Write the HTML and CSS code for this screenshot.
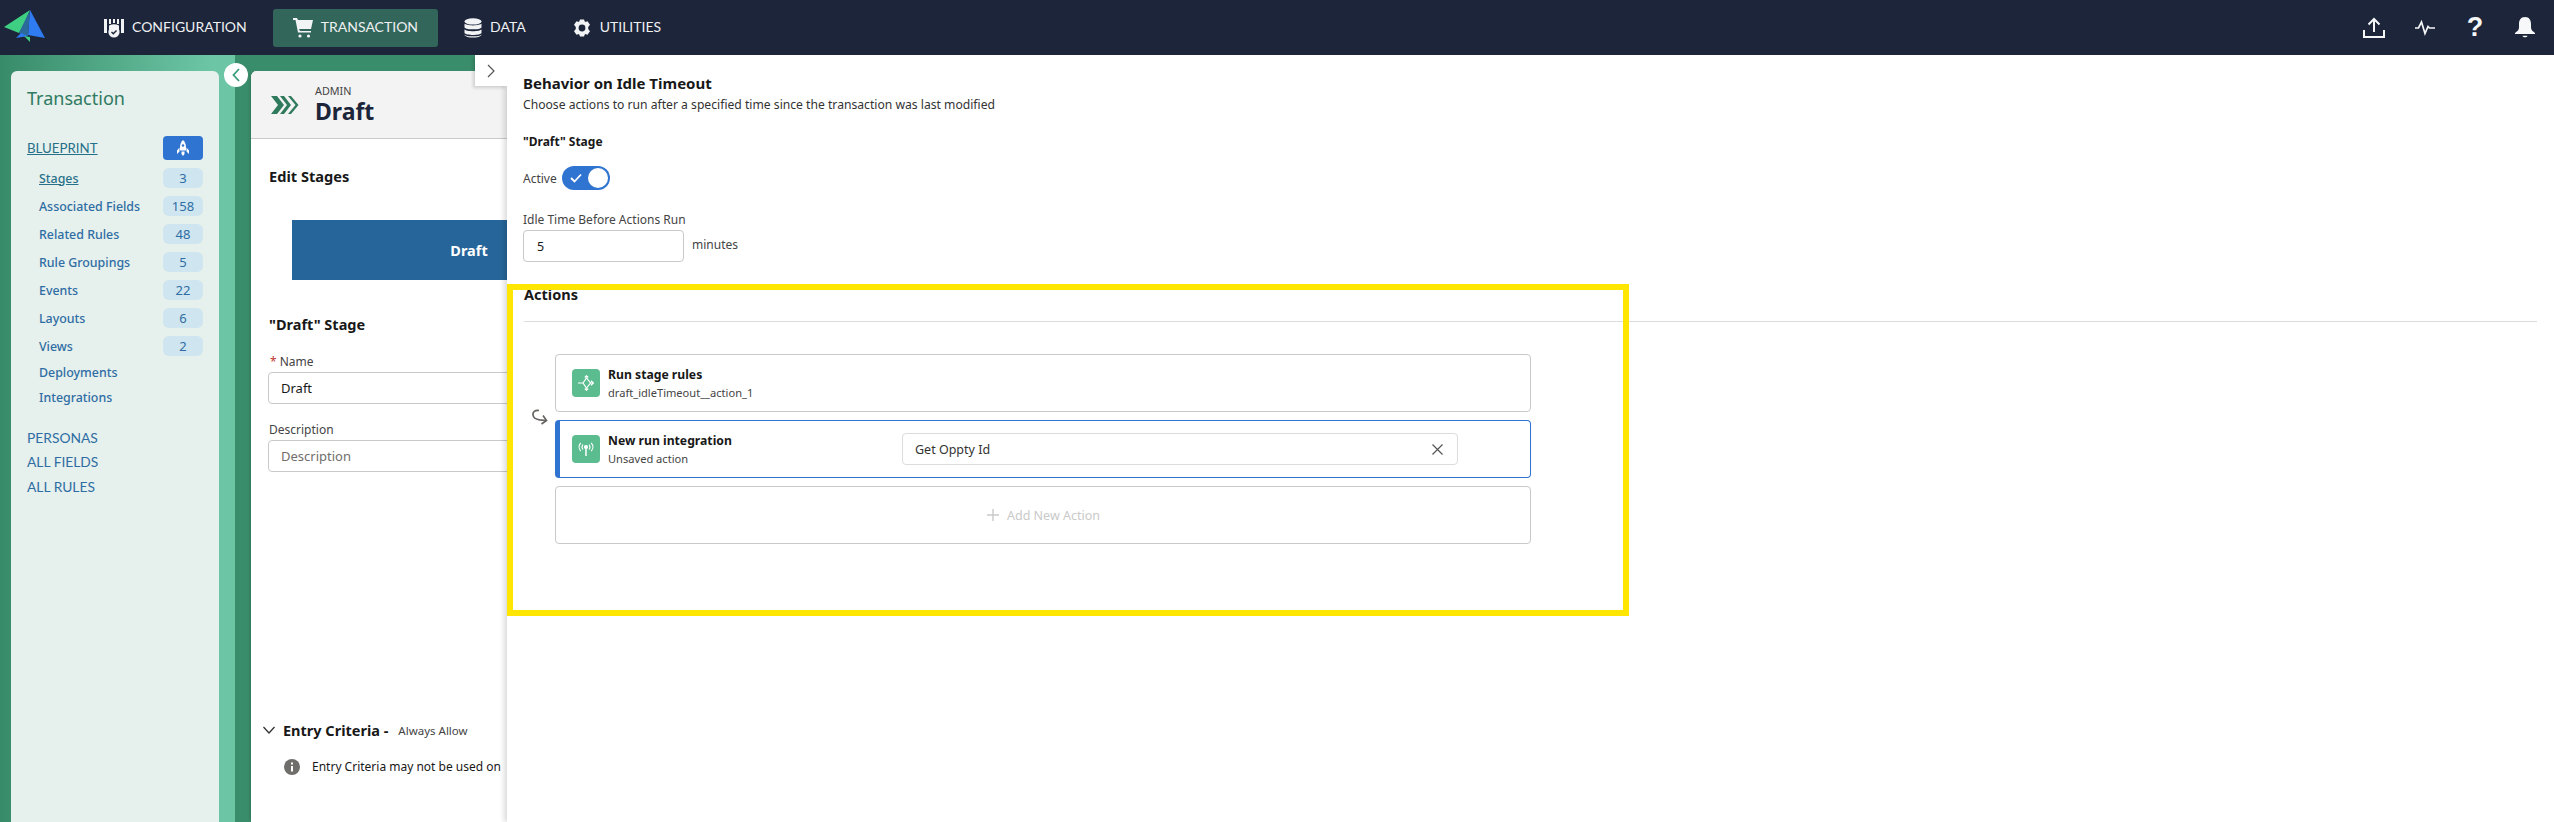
FILE: index.html
```html
<!DOCTYPE html>
<html lang="en">
<head>
<meta charset="utf-8">
<title>Behavior on Idle Timeout</title>
<link rel="stylesheet" href="styles.css">
</head>
<body>
<div class="app">
  <header class="topbar">
    <div class="logo">
      <svg width="46" height="46" viewBox="0 0 46 46"><path d="M3 27L29 10 24 22 18 33Z" fill="#3fcf83"/><path d="M29 10L44 38 27 35Z" fill="#2f7bf2"/><path d="M29 10L18 33 27 36Z" fill="#2a6b9c"/><path d="M15 38L20 33 27 36Z" fill="#2f7bf2"/><path d="M23 36L29 42 29 37Z" fill="#3fcf83"/></svg>
    </div>
    <nav class="nav">
      <a class="nav-item">
        <svg width="20" height="20" viewBox="0 0 20 20" fill="#f1f3f5"><rect x="0" y="1" width="3" height="14"/><rect x="17" y="1" width="3" height="14"/><rect x="5" y="1" width="2" height="5"/><rect x="9" y="1" width="2" height="4"/><rect x="13" y="1" width="2" height="5"/><path d="M5 7.500Q10 5 15 7.500V12H5Z"/><circle cx="10" cy="14" r="5.600"/><path d="M7.500 14l1.800 1.800 3.200-3.400" fill="none" stroke="#1c2539" stroke-width="1.400"/></svg>
        <span>CONFIGURATION</span>
      </a>
      <a class="nav-item active">
        <svg width="20" height="20" viewBox="0 0 20 20" fill="#f1f3f5"><path d="M0 0H4L5 2H20L18 11H6L7 13H18V14.500H5L2.500 2H0Z"/><circle cx="7" cy="18" r="1.600"/><circle cx="15.500" cy="18" r="1.600"/></svg>
        <span>TRANSACTION</span>
      </a>
      <a class="nav-item">
        <svg width="18" height="20" viewBox="0 0 18 20" fill="#f1f3f5"><ellipse cx="9" cy="3.400" rx="8.500" ry="3.200"/><path d="M.5 5.600C2 8 16 8 17.500 5.600V9.400C16 12 2 12 .5 9.400Z"/><path d="M.5 11.200C2 13.800 16 13.800 17.500 11.200V15C16 17.600 2 17.600 .5 15Z"/><path d="M.5 16.400C2 19 16 19 17.500 16.400V17C16 20.400 2 20.400 .5 17Z"/></svg>
        <span>DATA</span>
      </a>
      <a class="nav-item">
        <svg width="20" height="20" viewBox="0 0 20 20"><path d="M8 1.500H12L13 4 15.500 3.200 18 6.800 16.200 9V11L18 13.200 15.500 16.800 13 16 12 18.500H8L7 16 4.500 16.800 2 13.200 3.800 11V9L2 6.800 4.500 3.200 7 4Z" fill="#f1f3f5"/><circle cx="10" cy="10" r="3.400" fill="#1c2539"/></svg>
        <span>UTILITIES</span>
      </a>
    </nav>
    <div class="tools">
      <svg width="22" height="22" viewBox="0 0 22 22" fill="none" stroke="#f4f6f8" stroke-width="2"><path d="M1 13V20H21V13"/><path d="M11 15V2M5.500 7.500L11 2l5.500 5.500"/></svg>
      <svg width="20" height="16" viewBox="0 0 20 16" fill="none" stroke="#f4f6f8" stroke-width="1.700"><path d="M0 8H3.500L6.500 2 10 13.500 13 6.500 14.500 8H20"/></svg>
      <span class="help">?</span>
      <svg width="20" height="22" viewBox="0 0 20 22" fill="#f7f8fa"><path d="M10 0C14.500 0 16 3.500 16 7V10.500C16 13 18 14.500 20 16V17H0V16C2 14.500 4 13 4 10.500V7C4 3.500 5.500 0 10 0Z"/><path d="M7.500 18.800H12.500C12 20.800 8 20.800 7.500 18.800Z"/></svg>
    </div>
  </header>

  <div class="workspace">
    <aside class="side">
      <div class="side-card">
        <div class="side-title">Transaction</div>
        <div class="bp-row">
          <a class="bp-link">BLUEPRINT</a>
          <span class="bp-btn">
            <svg width="12" height="16" viewBox="0 0 12 16" fill="#fff"><path d="M6 0C8.200 2 9 4.500 9 7.500V10.500H3V7.500C3 4.500 3.800 2 6 0Z"/><circle cx="6" cy="5.500" r="1.200" fill="#2f74d0"/><path d="M2.500 7.500L0 10.500V14L2.500 11.500ZM9.500 7.500L12 10.500V14L9.500 11.500Z"/><path d="M4.500 11.500H7.500V14L6 16 4.500 14Z"/></svg>
          </span>
        </div>
        <ul class="count-list">
          <li><a class="current">Stages</a><span class="badge">3</span></li>
          <li><a>Associated Fields</a><span class="badge">158</span></li>
          <li><a>Related Rules</a><span class="badge">48</span></li>
          <li><a>Rule Groupings</a><span class="badge">5</span></li>
          <li><a>Events</a><span class="badge">22</span></li>
          <li><a>Layouts</a><span class="badge">6</span></li>
          <li><a>Views</a><span class="badge">2</span></li>
        </ul>
        <a class="plain first">Deployments</a>
        <a class="plain second">Integrations</a>
        <a class="caps personas">PERSONAS</a>
        <a class="caps fields">ALL FIELDS</a>
        <a class="caps rules">ALL RULES</a>
      </div>
      <button class="collapse" aria-label="Collapse">
        <svg width="8" height="14" viewBox="0 0 8 14" fill="none" stroke="#3a9d7b" stroke-width="1.800"><path d="M7 1L1.500 7 7 13"/></svg>
      </button>
    </aside>

    <main class="main">
      <div class="main-head">
        <svg width="28" height="18" viewBox="0 0 28 18" fill="#2f7a5d"><path d="M0 0H6L13 9 6 18H0L7 9Z"/><path d="M9 0H13L20 9 13 18H9L16 9Z"/><path d="M17 0H20L27.500 9 20 18H17L24.500 9Z"/></svg>
        <div>
          <div class="eyebrow">ADMIN</div>
          <div class="page-title">Draft</div>
        </div>
      </div>
      <div class="main-body">
        <h2 class="edit-title">Edit Stages</h2>
        <div class="stage-bar">Draft</div>
        <h3 class="stage-title">"Draft" Stage</h3>
        <label class="field-label name-label"><span class="req">*</span>Name</label>
        <input class="text-input" value="Draft">
        <label class="field-label desc-label">Description</label>
        <input class="text-input" placeholder="Description">
        <div class="entry-head">
          <svg width="12" height="8" viewBox="0 0 12 8" fill="none" stroke="#333" stroke-width="1.300"><path d="M.5 1L6 7 11.500 1"/></svg>
          <strong>Entry Criteria -</strong>
          <span>Always Allow</span>
        </div>
        <div class="entry-note">
          <svg width="16" height="16" viewBox="0 0 16 16"><circle cx="8" cy="8" r="8" fill="#706e6b"/><rect x="7" y="7" width="2" height="5.500" fill="#fff"/><rect x="7" y="3.500" width="2" height="2" fill="#fff"/></svg>
          <span>Entry Criteria may not be used on</span>
        </div>
      </div>
    </main>

    <section class="panel">
      <button class="panel-tab" aria-label="Expand">
        <svg width="8" height="14" viewBox="0 0 8 14" fill="none" stroke="#555" stroke-width="1.200"><path d="M1 1L7 7 1 13"/></svg>
      </button>
      <h2 class="panel-title">Behavior on Idle Timeout</h2>
      <p class="panel-desc">Choose actions to run after a specified time since the transaction was last modified</p>
      <h3 class="panel-stage">"Draft" Stage</h3>
      <div class="active-row">
        <span class="muted active-label">Active</span>
        <span class="toggle">
          <svg width="12" height="10" viewBox="0 0 12 10" fill="none" stroke="#fff" stroke-width="1.800"><path d="M1 5l3.500 3.500L11 1.500"/></svg>
          <i class="knob"></i>
        </span>
      </div>
      <label class="muted idle-label">Idle Time Before Actions Run</label>
      <div class="idle-row">
        <input class="idle-input" value="5">
        <span class="muted">minutes</span>
      </div>
      <h3 class="actions-title">Actions</h3>
      <div class="actions">
        <svg class="reorder" width="16" height="16" viewBox="0 0 16 16" fill="none" stroke="#66645f" stroke-width="1.700"><path d="M7 1.500C3 .8.6 3 1 6 1.400 9 4 10.300 7.500 10.800L14 11.500"/><path d="M11 6.500L14.500 11.500 9.500 15"/></svg>
        <div class="action-list">
          <div class="action-card">
            <span class="action-icon">
              <svg width="16" height="16" viewBox="0 0 16 16" fill="none" stroke="#fff" stroke-width="1.200"><path d="M0 8H5M5 8L8.500 3 12.500 8 8.500 13ZM6.800 2.500L8.500 .8 10.200 2.500M6.800 13.500L8.500 15.200 10.200 13.500M13 5.800L15.500 8 13 10.200M12.500 8H15.500"/></svg>
            </span>
            <div class="action-text"><strong>Run stage rules</strong><span>draft_idleTimeout__action_1</span></div>
          </div>
          <div class="action-card selected">
            <span class="action-icon">
              <svg width="16" height="16" viewBox="0 0 16 16" fill="none" stroke="#fff" stroke-width="1.200"><circle cx="8" cy="6" r="1.500" fill="#fff"/><path d="M8 7V15" stroke-width="1.500"/><path d="M5 3.500C3.800 5 3.800 7 5 8.500M11 3.500C12.200 5 12.200 7 11 8.500M2.800 1.800C.6 4.200.6 7.800 2.800 10.200M13.200 1.800C15.400 4.200 15.400 7.800 13.200 10.200"/></svg>
            </span>
            <div class="action-text"><strong>New run integration</strong><span>Unsaved action</span></div>
            <div class="picker">
              <span>Get Oppty Id</span>
              <svg width="11" height="11" viewBox="0 0 11 11" fill="none" stroke="#555" stroke-width="1.200"><path d="M.5.500L10.500 10.500M10.500.500L.5 10.500"/></svg>
            </div>
          </div>
          <div class="action-card add">
            <svg width="14" height="14" viewBox="0 0 14 14" fill="none" stroke="#c9c9c9" stroke-width="1.400"><path d="M7 1V13M1 7H13"/></svg>
            <span>Add New Action</span>
          </div>
        </div>
      </div>
      <div class="highlight"></div>
    </section>
  </div>
</div>
</body>
</html>
```

FILE: styles.css
```css
* { box-sizing: border-box; }
html, body { margin: 0; padding: 0; }
body { font-family: "Noto Sans", "Open Sans", sans-serif; color: #181818; }
h2, h3, p, ul { margin: 0; padding: 0; }
li { list-style: none; }
button { border: 0; padding: 0; background: none; display: flex; align-items: center; justify-content: center; }

.app { width: 2554px; height: 822px; display: flex; flex-direction: column; overflow: hidden; }

/* top bar */
.topbar { height: 55px; flex: none; display: flex; align-items: center; background: #1c2539; position: relative; z-index: 3; }
.logo { width: 84px; height: 46px; padding-left: 1px; margin-top: -9px; flex: none; }
.nav { display: flex; align-items: center; gap: 6px; }
.nav-item { height: 38px; padding: 0 20px; display: flex; align-items: center; gap: 8px; border-radius: 3px; font: 400 14px/1 Lato, sans-serif; color: #eef0f2; }
.nav-item span { padding-bottom: 2px; }
.nav-item.active { background: #33665a; }
.tools { margin-left: auto; padding-right: 19px; display: flex; align-items: center; gap: 30px; }
.help { width: 20px; text-align: center; font: 700 27px/1 "Liberation Sans", sans-serif; color: #f4f6f8; }

/* workspace */
.workspace { flex: 1; display: flex; min-height: 0; background: #3a8d6b; }
.side { width: 235px; flex: none; padding: 16px 16px 0 11px; background: linear-gradient(90deg, #388b69 0%, #6cc6a6 90%); position: relative; }
.side-card { height: 100%; padding: 14px 16px 0; background: #e6f0ec; border-radius: 6px 6px 0 0; display: flex; flex-direction: column; }
.side-title { font-size: 18px; line-height: 26px; color: #2f7a62; }
.bp-row { margin-top: 25px; height: 24px; display: flex; align-items: center; justify-content: space-between; }
.bp-link { font: 400 13.300px/20px Lato, sans-serif; color: #26708a; text-decoration: underline; }
.bp-btn { width: 40px; height: 24px; border-radius: 4px; background: #2f74d0; display: flex; align-items: center; justify-content: center; }
.count-list { margin-top: 8px; padding-left: 12px; display: flex; flex-direction: column; gap: 8px; }
.count-list li { height: 20px; display: flex; align-items: center; justify-content: space-between; font-size: 12.400px; font-weight: 500; color: #2e6da4; }
.count-list .current { text-decoration: underline; color: #26708a; }
.badge { width: 40px; height: 20px; border-radius: 6px; background: #cfe5ef; text-align: center; font-size: 13px; font-weight: 400; line-height: 20px; }
.plain { padding-left: 12px; font-size: 12.400px; font-weight: 500; line-height: 20px; color: #2e6da4; }
.plain.first { margin-top: 7px; }
.plain.second { margin-top: 5px; }
.caps { font: 400 13.800px/20px Lato, sans-serif; color: #2e6da4; }
.caps.personas { margin-top: 20px; }
.caps.fields { margin-top: 4px; }
.caps.rules { margin-top: 5px; }
.collapse { position: absolute; left: 224px; top: 8px; width: 24px; height: 24px; border-radius: 50%; background: #fff; z-index: 2; }

/* main card */
.main { width: 256px; flex: none; margin: 16px 0 0 16px; background: #fff; border-radius: 6px 0 0 0; overflow: hidden; box-shadow: -3px 0 3px -2px rgba(0,0,0,.18); }
.main-head { height: 68px; padding-left: 20px; display: flex; align-items: center; gap: 16px; background: #f3f3f3; border-bottom: 1px solid #c9c9c9; }
.eyebrow { font-size: 10.800px; line-height: 14px; color: #444; margin-top: -1px; }
.page-title { font-size: 23px; font-weight: 700; line-height: 26px; color: #1c2539; }
.main-body { width: 700px; padding-left: 18px; }
.edit-title { margin-top: 27px; font-size: 14.600px; font-weight: 700; line-height: 20px; }
.stage-bar { margin: 34px 0 0 23px; width: 354px; height: 60px; background: #26659a; color: #fff; font-size: 14.500px; font-weight: 700; display: flex; align-items: center; justify-content: center; }
.stage-title { margin-top: 34px; font-size: 14.500px; font-weight: 700; line-height: 20px; }
.field-label { display: block; font-size: 12px; line-height: 16px; color: #444; }
.name-label { margin-top: 20px; }
.desc-label { margin-top: 18px; }
.req { color: #c23934; margin: 0 3px 0 1px; }
.text-input { display: block; margin: 2px 0 0 -1px; width: 420px; height: 32px; padding: 0 12px; border: 1px solid #c9c9c9; border-radius: 4px; font: 400 13px "Noto Sans", sans-serif; color: #181818; background: #fff; }
.text-input::placeholder { color: #706e6b; opacity: 1; }
.entry-head { margin: 247px 0 0 -6px; height: 22px; display: flex; align-items: center; white-space: nowrap; }
.entry-head strong { margin-left: 8px; font-size: 14.500px; line-height: 22px; }
.entry-head span { margin-left: 10px; font-size: 11.500px; color: #444; }
.entry-note { margin: 17px 0 0 15px; display: flex; align-items: center; gap: 12px; font-size: 12px; line-height: 18px; white-space: nowrap; }

/* side panel */
.panel { flex: 1; min-width: 0; padding: 18px 17px 0 16px; background: #fff; position: relative; box-shadow: -3px 0 5px rgba(0,0,0,.14); }
.panel-tab { position: absolute; left: -32px; top: 0; width: 32px; height: 31px; background: #fff; box-shadow: -2px 2px 3px rgba(0,0,0,.15); }
.panel-title { font-size: 15px; font-weight: 700; line-height: 20px; }
.panel-desc { margin-top: 3px; font-size: 12.150px; line-height: 18px; color: #333; white-space: nowrap; }
.panel-stage { margin-top: 19px; font-size: 12px; font-weight: 700; line-height: 18px; }
.active-row { margin-top: 15px; height: 24px; display: flex; align-items: center; gap: 5px; }
.active-label { padding-top: 2px; }
.muted { font-size: 12px; line-height: 16px; color: #444; }
.toggle { width: 48px; height: 24px; padding-left: 8px; border-radius: 12px; background: #2f74d0; display: flex; align-items: center; position: relative; }
.knob { position: absolute; right: 2px; top: 2px; width: 20px; height: 20px; border-radius: 50%; background: #fff; }
.idle-label { display: block; margin-top: 22px; }
.idle-row { margin-top: 2px; display: flex; align-items: flex-start; gap: 8px; }
.idle-row .muted { margin-top: 7px; line-height: 16px; }
.idle-input { width: 161px; height: 32px; padding: 0 13px; border: 1px solid #c9c9c9; border-radius: 4px; font: 400 12.500px "Noto Sans", sans-serif; color: #181818; }
.actions-title { margin-top: 22px; margin-left: 1px; padding-bottom: 17px; border-bottom: 1px solid #dcdcdc; font-size: 14.500px; font-weight: 700; line-height: 20px; }
.actions { margin: 32px 0 0 9px; display: flex; align-items: flex-start; }
.reorder { margin-top: 55px; flex: none; width: 16px; margin-right: 7px; }
.action-list { width: 976px; display: flex; flex-direction: column; gap: 8px; }
.action-card { height: 58px; padding-left: 16px; display: flex; align-items: center; border: 1px solid #c9c9c9; border-radius: 4px; }
.action-card.selected { padding-left: 12px; border: 1px solid #2f74d0; border-left-width: 5px; }
.action-icon { width: 28px; height: 28px; flex: none; border-radius: 4px; background: #5bbc90; display: flex; align-items: center; justify-content: center; }
.action-text { margin-left: 8px; display: flex; flex-direction: column; width: 294px; }
.action-text strong { padding-top: 1px; font-size: 12.200px; line-height: 18px; }
.action-text span { font-size: 11.100px; line-height: 17px; color: #444; }
.picker { width: 556px; height: 32px; padding: 0 14px 0 12px; border: 1px solid #dcdcdc; border-radius: 4px; display: flex; align-items: center; justify-content: space-between; font-size: 12.500px; color: #333; }
.action-card.add { padding: 0; justify-content: center; gap: 7px; font-size: 12.500px; color: #c9c9c9; }

/* yellow annotation over the panel */
.highlight { position: absolute; left: 0; top: 229px; width: 1122px; height: 332px; border: 6px solid #ffe600; pointer-events: none; }
```
